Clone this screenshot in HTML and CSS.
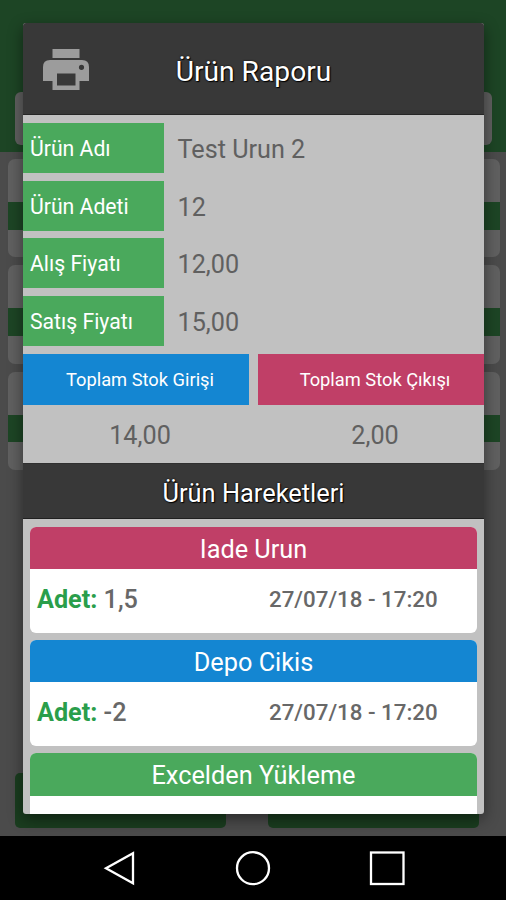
FILE: index.html
```html
<!DOCTYPE html>
<html lang="tr">
<head>
<meta charset="utf-8">
<title>Ürün Raporu</title>
<link rel="stylesheet" href="styles.css">
</head>
<body>
<div class="phone">
  <main class="screen">
    <div class="topbar"><div class="search"></div></div>
    <div class="list">
      <div class="item"><div class="stripe"></div></div>
      <div class="item"><div class="stripe"></div></div>
      <div class="item"><div class="stripe"></div></div>
    </div>
    <div class="buttons"><div class="button"></div><div class="button"></div></div>
  </main>
  <nav class="navbar">
    <svg width="506" height="64" viewBox="0 0 506 64" fill="none" stroke="#fff" stroke-width="2.3">
      <path d="M133 17.300V47.300L106 32.300Z"/>
      <circle cx="253" cy="32.200" r="16"/>
      <rect x="371" y="16.500" width="32.500" height="31.500"/>
    </svg>
  </nav>
  <section class="dialog">
    <header class="dialog-header">
      <svg class="printer" width="46" height="41" viewBox="0 0 46 41">
        <path fill="#9c9c9c" fill-rule="evenodd" d="M9.500 0H36.500V9H9.500ZM7 11H39Q46 11 46 18V32H36.500V41H9.500V32H0V18Q0 11 7 11ZM14 24.500V36.500H32.500V24.500ZM38.500 15.700A2.600 2.600 0 1 0 38.500 20.900A2.600 2.600 0 1 0 38.500 15.700Z"/>
      </svg>
      <h1 class="title">Ürün Raporu</h1>
    </header>
    <div class="fields">
      <div class="field"><div class="label">Ürün Adı</div><div class="value">Test Urun 2</div></div>
      <div class="field"><div class="label">Ürün Adeti</div><div class="value">12</div></div>
      <div class="field"><div class="label">Alış Fiyatı</div><div class="value">12,00</div></div>
      <div class="field"><div class="label">Satış Fiyatı</div><div class="value">15,00</div></div>
    </div>
    <div class="totals">
      <div class="total"><div class="total-head blue">Toplam Stok Girişi</div><div class="total-value">14,00</div></div>
      <div class="total"><div class="total-head pink">Toplam Stok Çıkışı</div><div class="total-value">2,00</div></div>
    </div>
    <h2 class="subtitle">Ürün Hareketleri</h2>
    <div class="moves">
      <article class="move">
        <div class="move-head pink">Iade Urun</div>
        <div class="move-body"><div class="qty"><span class="qty-label">Adet:</span> 1,5</div><div class="date">27/07/18 - 17:20</div></div>
      </article>
      <article class="move">
        <div class="move-head blue">Depo Cikis</div>
        <div class="move-body"><div class="qty"><span class="qty-label">Adet:</span> -2</div><div class="date">27/07/18 - 17:20</div></div>
      </article>
      <article class="move">
        <div class="move-head green">Excelden Yükleme</div>
        <div class="move-body"></div>
      </article>
    </div>
  </section>
</div>
</body>
</html>
```
FILE: styles.css
```css
* { box-sizing: border-box; }
body { margin: 0; font-family: Roboto, sans-serif; }
.phone { position: relative; width: 506px; height: 900px; overflow: hidden; background: #4b4b4b; display: flex; flex-direction: column; }
.screen { height: 836px; display: flex; flex-direction: column; }
.topbar { height: 152px; padding: 92px 14px 0 15px; background: #1d4525; }
.search { height: 53px; border-radius: 6px; background: #606060; }
.list { padding: 7px 6px 0 8px; display: flex; flex-direction: column; gap: 8px; }
.item { height: 98.300px; padding-top: 43px; border-radius: 7px; background: #606060; }
.stripe { height: 27.500px; background: #1d4525; }
.buttons { margin-top: auto; margin-bottom: 8px; padding: 0 27px 0 15px; display: flex; justify-content: space-between; }
.button { width: 211px; height: 55px; border-radius: 5px; background: #1a3d1f; }
.navbar { height: 64px; background: #000; }
.navbar svg { display: block; }
.dialog { position: absolute; left: 23px; top: 23px; width: 461px; height: 791px; overflow: hidden; border-radius: 3px; background: #c1c1c1; display: flex; flex-direction: column; box-shadow: 0 5px 15px rgba(0,0,0,.45); }
.dialog-header { height: 92px; flex: none; padding-left: 20px; background: #383838; border-bottom: 1px solid #262626; display: grid; grid-template-columns: 46px 1fr 66px; align-items: center; }
.printer { margin-top: 2px; }
.title, .subtitle { margin: 0; font-weight: 400; color: #fff; text-align: center; text-shadow: 0 0 2px #000, 1px 1px 1px #000; }
.title { font-size: 28.200px; padding-top: 6px; }
.fields { padding-top: 8px; display: flex; flex-direction: column; gap: 7.300px; }
.field { height: 50.300px; display: flex; align-items: center; }
.label { width: 140.500px; height: 100%; padding: 1px 0 0 7px; display: flex; align-items: center; background: #4aa95c; color: #fff; font-size: 21.200px; }
.value { padding: 3px 0 0 14px; font-size: 25.200px; color: #606060; }
.totals { height: 109px; margin-top: 8px; flex: none; display: grid; grid-template-columns: 1fr 1fr; gap: 9px; }
.total-head { height: 51px; display: flex; align-items: center; justify-content: center; padding-left: 8px; color: #fff; font-size: 18.300px; }
.total-value { height: 58px; padding: 3px 0 0 8px; display: flex; align-items: center; justify-content: center; color: #606060; font-size: 25.200px; }
.blue { background: #1486d2; }
.pink { background: #c03f67; }
.green { background: #4aa95c; }
.subtitle { height: 56px; flex: none; padding-top: 2px; line-height: 55px; background: #383838; border-top: 1px solid #303030; border-bottom: 1px solid #202020; font-size: 25.400px; }
.moves { padding: 7.500px 7px 0; display: flex; flex-direction: column; gap: 7.300px; }
.move { height: 106px; flex: none; overflow: hidden; border-radius: 6px; background: #fff; }
.move-head { height: 42.500px; line-height: 45px; text-align: center; color: #fff; font-size: 25.300px; }
.move-body { height: 60px; display: grid; grid-template-columns: 232px 1fr; align-items: center; padding-left: 7px; font-weight: 500; color: #686868; }
.qty { font-size: 25.200px; }
.qty-label { color: #2a9e4b; font-weight: 700; }
.date { font-size: 22.300px; padding-bottom: 1px; }
```
